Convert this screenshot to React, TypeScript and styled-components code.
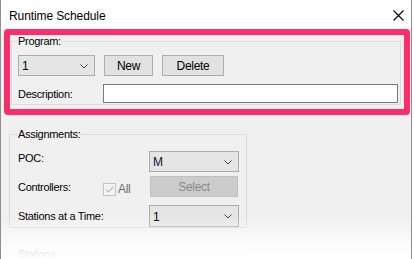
import styled, { createGlobalStyle } from 'styled-components';

const GlobalStyle = createGlobalStyle`
  html,
  body {
    margin: 0;
    padding: 0;
    background: #ffffff;
    overflow: hidden;
  }

  body {
    font-family: 'Liberation Sans', Arial, sans-serif;
    font-size: 11px;
    color: #000000;
  }
`;

const ChevronDown = () => (
  <svg width='8' height='5' viewBox='0 0 8 5'>
    <path d='M0.5 0.5 L4 4 L7.5 0.5' fill='none' stroke='#444444' strokeWidth='1' />
  </svg>
);

const CloseIcon = () => (
  <svg width='11' height='11' viewBox='0 0 11 11'>
    <path d='M0.5 0.5 L10.5 10.5 M10.5 0.5 L0.5 10.5' stroke='#000000' strokeWidth='1.1' />
  </svg>
);

const CheckMark = () => (
  <svg width='11' height='11' viewBox='0 0 11 11'>
    <path d='M2 5.5 L4.5 8 L9.5 2.5' fill='none' stroke='#bdbdbd' strokeWidth='1.2' />
  </svg>
);

const App = () => {
  return (
    <>
      <GlobalStyle />
      <Window>
        <TitleBar>
          <Title>Runtime Schedule</Title>
          <CloseButton>
            <CloseIcon />
          </CloseButton>
        </TitleBar>
        <Body>
          <Highlight>
            <Group $width='auto' $margin='0 3px 4px 1px' $padding='7px 2px 1px 6px'>
              <Legend>Program:</Legend>
              <ProgramRow>
                <Combo $width={77}>
                  <span>1</span>
                  <ChevronDown />
                </Combo>
                <Button $width={49}>New</Button>
                <Button $width={62}>Delete</Button>
              </ProgramRow>
              <DescriptionRow>
                <Label>Description:</Label>
                <TextBox />
              </DescriptionRow>
            </Group>
          </Highlight>
          <Group $width='238px' $margin='13px 0 0 8px' $padding='4px 7px 0 8px'>
            <Legend>Assignments:</Legend>
            <AssignRow $top={6}>
              <Label $top>POC:</Label>
              <span />
              <Combo $width={90} $tint>
                <span>M</span>
                <ChevronDown />
              </Combo>
            </AssignRow>
            <AssignRow $top={4}>
              <Label>Controllers:</Label>
              <CheckArea>
                <CheckBox>
                  <CheckMark />
                </CheckBox>
                <DimText>All</DimText>
              </CheckArea>
              <DisabledButton>Select</DisabledButton>
            </AssignRow>
            <AssignRow $top={8}>
              <Label>Stations at a Time:</Label>
              <span />
              <Combo $width={90} $height={22}>
                <span>1</span>
                <ChevronDown />
              </Combo>
            </AssignRow>
          </Group>
          <Group $width='238px' $margin='20px 0 0 8px' $padding='4px 7px 20px 8px'>
            <Legend>Stations:</Legend>
          </Group>
        </Body>
        <Fade />
      </Window>
    </>
  );
};

const Window = styled.div`
  position: relative;
  width: 410px;
  height: 259px;
  border-left: 1px solid #8f8f8f;
  border-right: 1px solid #8f8f8f;
  display: flex;
  flex-direction: column;
  overflow: hidden;
`;

const TitleBar = styled.div`
  height: 29px;
  background: #ffffff;
  display: flex;
  align-items: center;
  justify-content: space-between;
  padding: 0 7px 0 8px;
  flex-shrink: 0;
`;

const Title = styled.div`
  font-size: 12px;
  letter-spacing: -0.1px;
  padding-top: 2px;
`;

const CloseButton = styled.div`
  display: flex;
  align-items: center;
  padding-top: 1px;
`;

const Body = styled.div`
  flex: 1;
  background: #f0f0f0;
  display: flex;
  flex-direction: column;
`;

const Highlight = styled.div`
  margin: 0 1px 0 3px;
  border: 6px solid #fe2c6a;
  border-radius: 4px;
  display: flex;
  flex-direction: column;
`;

const Group = styled.fieldset<{ $width: string; $margin: string; $padding: string }>`
  width: ${(p) => p.$width};
  margin: ${(p) => p.$margin};
  padding: ${(p) => p.$padding};
  border: 1px solid #dcdcdc;
  min-width: 0;
  box-sizing: border-box;
  display: flex;
  flex-direction: column;
`;

const Legend = styled.legend`
  padding: 0;
  margin-left: 0;
  line-height: 13px;
  letter-spacing: -0.3px;
`;

const ProgramRow = styled.div`
  display: flex;
  align-items: center;
  gap: 9px;
`;

const DescriptionRow = styled.div`
  display: flex;
  align-items: center;
  justify-content: space-between;
  margin-top: 8px;
`;

const AssignRow = styled.div<{ $top: number }>`
  display: grid;
  grid-template-columns: 85px 46px 90px;
  align-items: center;
  margin-top: ${(p) => p.$top}px;
`;

const Label = styled.div<{ $top?: boolean }>`
  letter-spacing: -0.3px;
  white-space: nowrap;
  align-self: ${(p) => (p.$top ? 'start' : 'center')};
  padding-top: ${(p) => (p.$top ? '1px' : '0')};
`;

const Combo = styled.div<{ $width: number; $height?: number; $tint?: boolean }>`
  width: ${(p) => p.$width}px;
  height: ${(p) => p.$height ?? 21}px;
  box-sizing: border-box;
  background: #e5e5e5;
  border: 1px solid #acacac;
  display: flex;
  align-items: center;
  justify-content: space-between;
  padding: 1px 6px 0 3px;
  font-size: 12px;
  color: ${(p) => (p.$tint ? '#101040' : '#000000')};
`;

const Button = styled.div<{ $width: number }>`
  width: ${(p) => p.$width}px;
  height: 21px;
  box-sizing: border-box;
  background: #e1e1e1;
  border: 1px solid #adadad;
  display: flex;
  align-items: center;
  justify-content: center;
  font-size: 12px;
  letter-spacing: -0.3px;
`;

const TextBox = styled.div`
  width: 295px;
  height: 19px;
  box-sizing: border-box;
  background: #ffffff;
  border: 1px solid #7a7a7a;
`;

const CheckArea = styled.div`
  display: flex;
  align-items: flex-end;
  align-self: end;
  gap: 2px;
  padding-bottom: 1px;
`;

const CheckBox = styled.div`
  width: 13px;
  height: 13px;
  box-sizing: border-box;
  border: 1px solid #c4c4c4;
  background: #f4f4f4;
  display: flex;
  align-items: center;
  justify-content: center;
`;

const DimText = styled.span`
  color: #6d6d6d;
  font-size: 12px;
  line-height: 13px;
  letter-spacing: -0.3px;
`;

const DisabledButton = styled.div`
  width: 88px;
  height: 21px;
  margin-left: 1px;
  box-sizing: border-box;
  background: #cccccc;
  border: 1px solid #bfbfbf;
  color: #8a8a8a;
  display: flex;
  align-items: center;
  justify-content: center;
  font-size: 12px;
  letter-spacing: -0.3px;
`;

const Fade = styled.div`
  position: absolute;
  left: -1px;
  right: -1px;
  bottom: 0;
  height: 42px;
  background: linear-gradient(rgba(255, 255, 255, 0), rgba(255, 255, 255, 0.8) 70%, #ffffff);
  pointer-events: none;
`;

export default App;
